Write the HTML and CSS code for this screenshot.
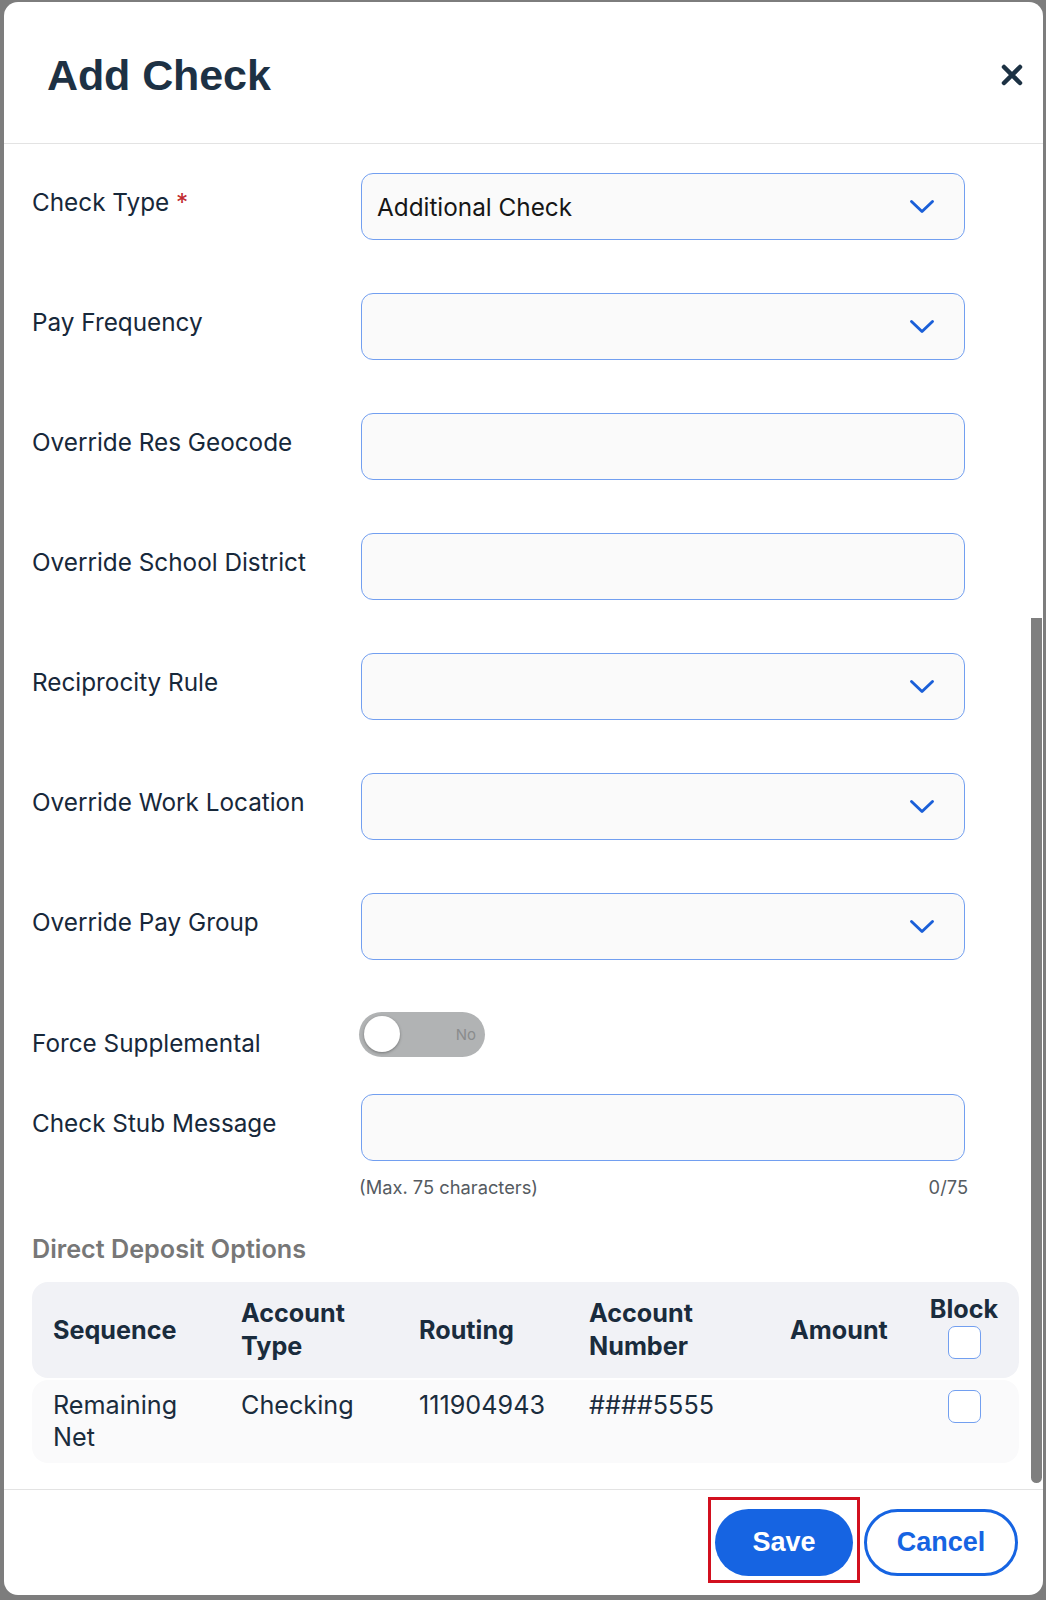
FILE: index.html
```html
<!DOCTYPE html>
<html lang="en">
<head>
<meta charset="utf-8">
<title>Add Check</title>
<link rel="stylesheet" href="styles.css">
</head>
<body>
<div class="modal">
  <header class="modal-header">
    <h1 class="title">Add Check</h1>
    <button class="close" aria-label="Close">
      <svg width="22" height="22" viewBox="0 0 22 22"><path d="M3 3 L19 19 M19 3 L3 19" stroke="#1d3244" stroke-width="4.5" stroke-linecap="round"/></svg>
    </button>
  </header>

  <div class="modal-body">
    <div class="field">
      <div class="label">Check Type <span class="req">*</span></div>
      <div class="select"><span class="value">Additional Check</span><svg class="chev" width="26" height="15" viewBox="0 0 26 15"><path d="M2.5 2.5 L13 12.5 L23.5 2.5" fill="none" stroke="#1a5fd8" stroke-width="2.9" stroke-linecap="round" stroke-linejoin="round"/></svg></div>
    </div>
    <div class="field">
      <div class="label">Pay Frequency</div>
      <div class="select"><span class="value"></span><svg class="chev" width="26" height="15" viewBox="0 0 26 15"><path d="M2.5 2.5 L13 12.5 L23.5 2.5" fill="none" stroke="#1a5fd8" stroke-width="2.9" stroke-linecap="round" stroke-linejoin="round"/></svg></div>
    </div>
    <div class="field">
      <div class="label">Override Res Geocode</div>
      <div class="input"></div>
    </div>
    <div class="field">
      <div class="label">Override School District</div>
      <div class="input"></div>
    </div>
    <div class="field">
      <div class="label">Reciprocity Rule</div>
      <div class="select"><span class="value"></span><svg class="chev" width="26" height="15" viewBox="0 0 26 15"><path d="M2.5 2.5 L13 12.5 L23.5 2.5" fill="none" stroke="#1a5fd8" stroke-width="2.9" stroke-linecap="round" stroke-linejoin="round"/></svg></div>
    </div>
    <div class="field">
      <div class="label">Override Work Location</div>
      <div class="select"><span class="value"></span><svg class="chev" width="26" height="15" viewBox="0 0 26 15"><path d="M2.5 2.5 L13 12.5 L23.5 2.5" fill="none" stroke="#1a5fd8" stroke-width="2.9" stroke-linecap="round" stroke-linejoin="round"/></svg></div>
    </div>
    <div class="field">
      <div class="label">Override Pay Group</div>
      <div class="select"><span class="value"></span><svg class="chev" width="26" height="15" viewBox="0 0 26 15"><path d="M2.5 2.5 L13 12.5 L23.5 2.5" fill="none" stroke="#1a5fd8" stroke-width="2.9" stroke-linecap="round" stroke-linejoin="round"/></svg></div>
    </div>
    <div class="field field-toggle">
      <div class="label label-toggle">Force Supplemental</div>
      <div class="toggle"><span class="knob"></span><span class="toggle-text">No</span></div>
    </div>
    <div class="field field-stub">
      <div class="label">Check Stub Message</div>
      <div class="input"></div>
    </div>
    <div class="field helper-row">
      <div></div>
      <div class="helper"><span>(Max. 75 characters)</span><span>0/75</span></div>
    </div>

    <h2 class="section">Direct Deposit Options</h2>

    <div class="dd-table">
      <div class="dd-row dd-head">
        <div class="cell">Sequence</div>
        <div class="cell">Account<br>Type</div>
        <div class="cell">Routing</div>
        <div class="cell">Account<br>Number</div>
        <div class="cell">Amount</div>
        <div class="cell cell-block">Block<span class="checkbox"></span></div>
      </div>
      <div class="dd-row dd-body">
        <div class="cell">Remaining<br>Net</div>
        <div class="cell">Checking</div>
        <div class="cell">111904943</div>
        <div class="cell">####5555</div>
        <div class="cell"></div>
        <div class="cell cell-block"><span class="checkbox"></span></div>
      </div>
    </div>

    <div class="scroll-thumb"></div>
  </div>

  <footer class="modal-footer">
    <span class="highlight"><button class="btn btn-save">Save</button></span>
    <button class="btn btn-cancel">Cancel</button>
  </footer>
</div>
</body>
</html>
```

FILE: styles.css
```css
* { box-sizing: border-box; }

html, body {
  margin: 0;
  padding: 0;
}

body {
  background: #7d7d7d;
  padding: 2px 3px 5px 4px;
  font-family: Inter, "Noto Sans", sans-serif;
  color: #1b2b3c;
}

.modal {
  width: 1039px;
  height: 1593px;
  background: #ffffff;
  border-radius: 14px;
  overflow: hidden;
  display: flex;
  flex-direction: column;
}

.modal-header {
  height: 142px;
  flex: none;
  display: flex;
  align-items: center;
  justify-content: space-between;
  padding: 5px 20px 0 43px;
  border-bottom: 1px solid #e3e3e3;
}

.title {
  margin: 0;
  font-family: "Liberation Sans", Arial, sans-serif;
  font-weight: 700;
  font-size: 43px;
  color: #1d3144;
  letter-spacing: -0.1px;
}

.close {
  border: 0;
  background: none;
  padding: 0;
  width: 22px;
  height: 22px;
  display: flex;
}

.modal-body {
  flex: 1;
  position: relative;
  padding: 29px 24px 0 28px;
}

.field {
  display: grid;
  grid-template-columns: 329px 604px;
  margin-bottom: 53px;
}

.label {
  font-size: 24.3px;
  line-height: 30px;
  padding-top: 14px;
  color: #17283a;
}

.req {
  color: #c12a2f;
}

.select,
.input {
  height: 67px;
  border: 1.8px solid #729ff0;
  border-radius: 12px;
  background: #fafafa;
}

.select {
  display: flex;
  align-items: center;
  justify-content: space-between;
  padding: 0 29px 0 15px;
}

.value {
  font-size: 24.3px;
  color: #161616;
}

.chev {
  flex: none;
}

.field-toggle {
  margin-top: -1px;
  margin-bottom: 36px;
}

.label-toggle {
  padding-top: 16px;
}

.toggle {
  width: 126px;
  height: 45px;
  margin-left: -2px;
  border-radius: 23px;
  background: #b1b3b4;
  position: relative;
  display: flex;
  align-items: center;
  justify-content: flex-end;
  padding-right: 9px;
}

.knob {
  position: absolute;
  left: 5px;
  top: 4px;
  width: 36px;
  height: 36px;
  border-radius: 50%;
  background: #ffffff;
  box-shadow: 0 1px 3px rgba(0, 0, 0, 0.35);
}

.toggle-text {
  font-size: 15px;
  color: #8a8c8d;
}

.field-stub {
  margin-bottom: 0;
}

.helper-row {
  margin-bottom: 0;
  margin-top: 15px;
}

.helper {
  display: flex;
  justify-content: space-between;
  font-size: 18.3px;
  line-height: 22px;
  color: #555b61;
  margin-left: -2px;
  margin-right: -3px;
}

.section {
  margin: 36px 0 18px 0;
  font-size: 25.2px;
  line-height: 30px;
  font-weight: 600;
  color: #777777;
}

.dd-table {
  width: 987px;
  display: flex;
  flex-direction: column;
  gap: 2px;
}

.dd-row {
  display: grid;
  grid-template-columns: 188px 178px 170px 201px 124px 100px;
  padding: 0 5px 0 21px;
  border-radius: 16px;
}

.dd-head {
  height: 96px;
  background: #f1f2f6;
  align-items: center;
  font-weight: 700;
  font-size: 25.2px;
  line-height: 33px;
  color: #1a2c3d;
}

.dd-body {
  height: 83px;
  background: #fafafb;
  padding-top: 9px;
  font-size: 25.2px;
  line-height: 32px;
  color: #1a2c3d;
}

.cell-block {
  display: flex;
  flex-direction: column;
  align-items: center;
}

.dd-head .cell-block {
  margin-top: -8px;
}

.checkbox {
  display: block;
  width: 33px;
  height: 33px;
  border: 1.8px solid #729ff0;
  border-radius: 7px;
  background: #ffffff;
}

.dd-body .checkbox {
  margin-top: 1px;
}

.scroll-thumb {
  position: absolute;
  right: 1px;
  top: 474px;
  bottom: 6px;
  width: 11px;
  background: #7f7f7f;
  border-radius: 0 0 6px 6px;
}

.modal-footer {
  flex: none;
  height: 106px;
  border-top: 1px solid #e3e3e3;
  display: flex;
  justify-content: flex-end;
  align-items: flex-start;
  padding: 7px 25px 0 0;
}

.highlight {
  display: block;
  border: 3px solid #d2101f;
  padding: 9px 4px 4px 4px;
}

.btn {
  font-family: "Liberation Sans", Arial, sans-serif;
  font-weight: 700;
  font-size: 27px;
  height: 67px;
  border-radius: 34px;
  cursor: pointer;
}

.btn-save {
  display: block;
  width: 138px;
  background: #1664e2;
  color: #ffffff;
  border: 0;
}

.btn-cancel {
  width: 154px;
  margin-top: 12px;
  margin-left: 4px;
  background: #ffffff;
  color: #1664e2;
  border: 3px solid #1664e2;
}
```
